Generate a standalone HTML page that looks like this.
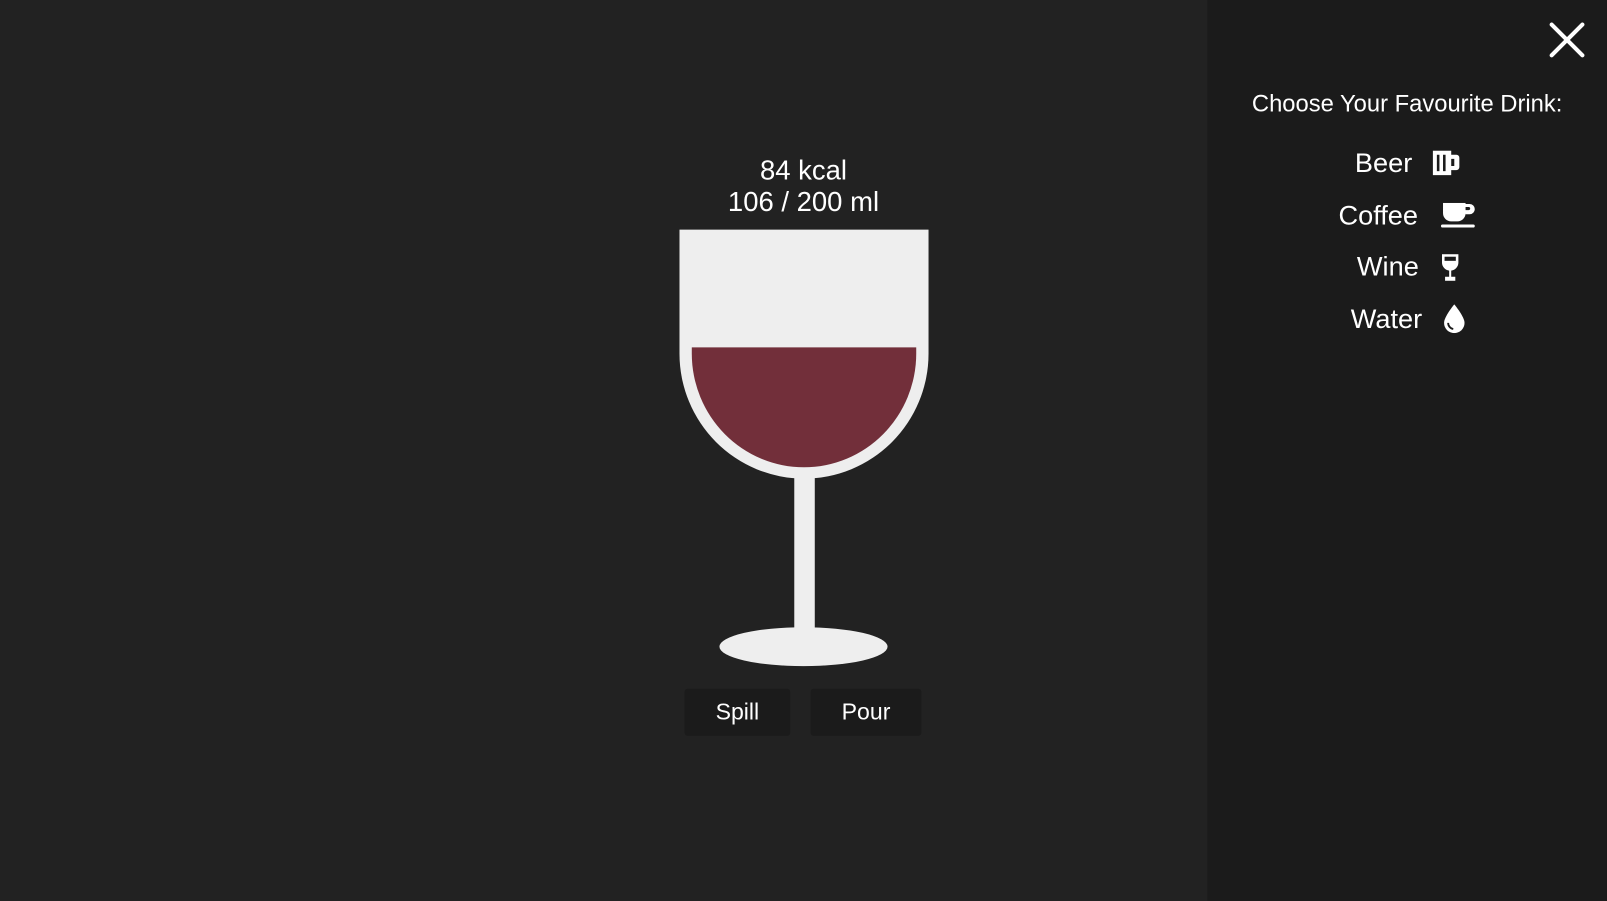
<!DOCTYPE html>
<html><head><meta charset="utf-8"><style>
html,body{margin:0;padding:0;width:1607px;height:901px;overflow:hidden;background:#222;}
#w{position:absolute;left:0;top:0;width:1568px;height:879px;transform:scale(1.02487);transform-origin:0 0;font-family:"Liberation Sans",Arial,sans-serif;color:#fff;}
.side{position:absolute;left:1178px;top:0;width:390px;height:879px;background:#1b1b1b;}
.t{position:absolute;text-align:center;white-space:nowrap;}
.btn{position:absolute;top:672px;height:46px;background:#1b1b1b;border-radius:3px;font-size:22.5px;line-height:46px;text-align:center;}
.item{position:absolute;font-size:26.5px;line-height:30px;white-space:nowrap;}
</style></head><body><div id="w">
<div class="t" style="left:584px;width:400px;top:151px;font-size:26.8px;line-height:31px;">84 kcal<br>106 / 200 ml</div>
<svg style="position:absolute;left:0;top:0" width="1178" height="879">
<path d="M663 224 H906 V345 A121.5 122 0 0 1 663 345 Z" fill="#eeeeee"/>
<path d="M675 339 H894 V345 A109.5 111 0 0 1 675 345 Z" fill="#722f3a"/>
<rect x="775" y="460" width="20" height="160" fill="#eeeeee"/>
<ellipse cx="784" cy="631" rx="82" ry="19" fill="#eeeeee"/>
</svg>
<div class="btn" style="left:668px;width:103px;">Spill</div>
<div class="btn" style="left:791px;width:108px;">Pour</div>
<div class="side">
<svg style="position:absolute;left:334px;top:22px" width="34" height="34"><path d="M2 2L32 32M32 2L2 32" stroke="#fff" stroke-width="4" stroke-linecap="round"/></svg>
<div class="t" style="left:0;width:390px;top:88px;font-size:23.2px;">Choose Your Favourite Drink:</div>
<div class="item" style="left:144px;top:144px;">Beer</div>
<svg style="position:absolute;left:220px;top:147px" width="26" height="24"><path d="M0 0H18V24H0Z M18 4H23A3 3 0 0 1 26 7V16A3 3 0 0 1 23 19H18V15H21V8H18Z" fill="#fff"/><rect x="4" y="4" width="2.5" height="16" fill="#1b1b1b"/><rect x="10" y="4" width="2.5" height="16" fill="#1b1b1b"/></svg>
<div class="item" style="left:128px;top:195px;">Coffee</div>
<svg style="position:absolute;left:228px;top:198px" width="34" height="25"><path d="M2 0H24V10A8 8 0 0 1 16 18H10A8 8 0 0 1 2 10Z M24 1H28A5 5 0 0 1 28 11H24V7H27A1.5 1.5 0 0 0 27 4H24Z" fill="#fff"/><rect x="0" y="21" width="33" height="3" rx="1.5" fill="#fff"/></svg>
<div class="item" style="left:146px;top:245px;">Wine</div>
<svg style="position:absolute;left:228px;top:248px" width="18" height="26"><path d="M1 0H17V8A8 8 0 0 1 10 16V22H14V26H4V22H8V16A8 8 0 0 1 1 8Z" fill="#fff"/><rect x="3.5" y="2.5" width="11" height="4" fill="#1b1b1b"/></svg>
<div class="item" style="left:140px;top:296px;">Water</div>
<svg style="position:absolute;left:231px;top:297px" width="20" height="28"><path d="M10 0C10 0 0 12 0 18A10 10 0 0 0 20 18C20 12 10 0 10 0Z" fill="#fff"/><path d="M4 18A6 6 0 0 0 9 24" stroke="#1b1b1b" stroke-width="1.8" fill="none"/></svg>
</div>
</div></body></html>
